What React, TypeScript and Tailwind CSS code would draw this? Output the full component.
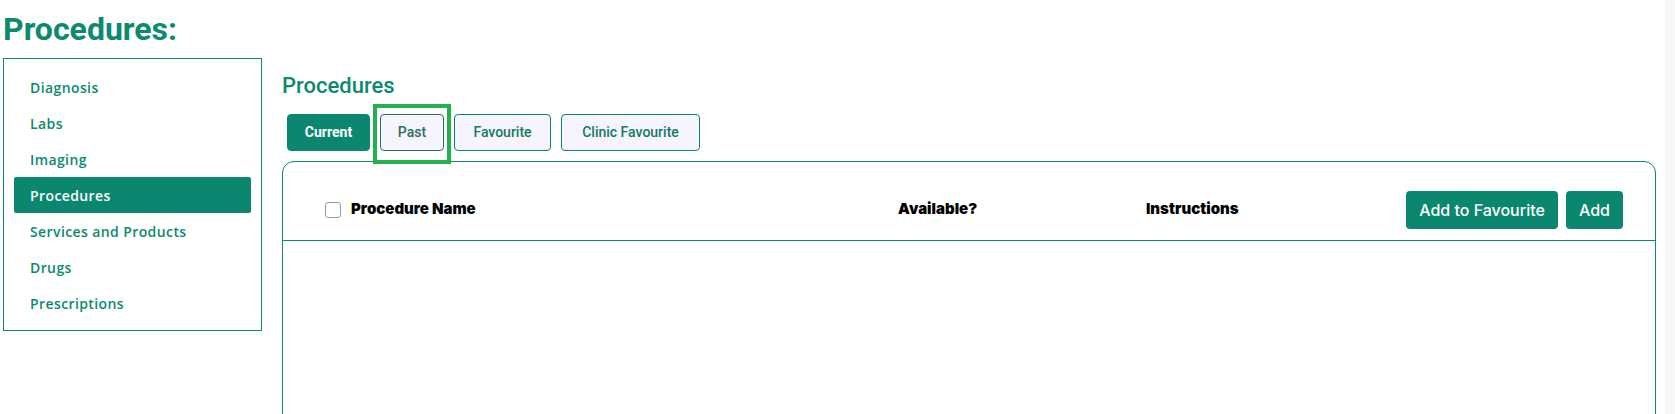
import React, { useState } from 'react';

const SECTIONS = [
  'Diagnosis',
  'Labs',
  'Imaging',
  'Procedures',
  'Services and Products',
  'Drugs',
  'Prescriptions',
];

const TABS = [
  { label: 'Current', width: 'w-[83px]' },
  { label: 'Past', width: 'w-[64px]' },
  { label: 'Favourite', width: 'w-[97px]' },
  { label: 'Clinic Favourite', width: 'w-[139px]' },
];

export default function App() {
  const [section, setSection] = useState('Procedures');
  const [tab, setTab] = useState('Current');
  const [allChecked, setAllChecked] = useState(false);

  return (
    <div className="flex h-[414px] w-full overflow-hidden bg-white font-['Roboto',sans-serif]">
      <div className="flex min-w-0 flex-1 flex-col">
        {/* page title */}
        <h1 className="ml-[3px] mt-[10px] text-[32px] font-bold leading-[38px] text-[#0b8a6e]">
          Procedures:
        </h1>

        <div className="mt-[10px] flex flex-1 items-start">
          {/* section menu */}
          <nav className="ml-[3px] w-[259px] shrink-0 border border-[#0b8a6e] px-[10px] pb-[9px] pt-[10px] font-['Open_Sans',sans-serif]">
            {SECTIONS.map((s) => (
              <button
                key={s}
                onClick={() => setSection(s)}
                className={`flex h-[36px] w-full items-center rounded-[2px] pl-[16px] text-left text-[14px] font-semibold tracking-[0.4px] ${
                  section === s ? 'bg-[#0b876f] text-white' : 'text-[#0b8a6e]'
                }`}
              >
                {s}
              </button>
            ))}
          </nav>

          {/* main column */}
          <main className="ml-[20px] mr-[9px] flex min-w-0 flex-1 flex-col pt-[14px]">
            <h2 className="text-[22px] font-medium leading-[28px] text-[#0b8a6e]">Procedures</h2>

            <div className="ml-[5px] mt-[14px] flex gap-[10px]">
              {TABS.map((t) => (
                <div key={t.label} className="relative">
                  <button
                    onClick={() => setTab(t.label)}
                    className={`h-[37px] ${t.width} rounded-[4px] border text-[14px] ${
                      tab === t.label
                        ? 'border-[#0b876f] bg-[#0b876f] font-bold text-white'
                        : t.label === 'Past'
                          ? 'border-[#2d6e64] bg-[#f6f4fd] font-medium text-[#2d6e64]'
                          : 'border-[#0b876f] bg-[#f6f4fd] font-medium text-[#137a66]'
                    }`}
                  >
                    {t.label}
                  </button>
                  {t.label === 'Past' && (
                    <div className="pointer-events-none absolute -left-[7px] -top-[10px] h-[60px] w-[78px] border-[4px] border-[#22b14c]" />
                  )}
                </div>
              ))}
            </div>

            {/* table card */}
            <section className="mt-[10px] h-[400px] rounded-t-[12px] border border-[#0b8a6e]">
              <div className="flex h-[79px] items-center border-b border-[#0b8a6e] pl-[42px] pr-[32px] pt-[17px] font-['Inter',sans-serif] text-[15px] font-black text-black">
                <div className="flex w-[573px] items-center gap-[10px]">
                  <button
                    onClick={() => setAllChecked((v) => !v)}
                    className={`h-[16px] w-[16px] rounded-[3px] border ${
                      allChecked ? 'border-[#0b876f] bg-[#0b876f]' : 'border-[#9a9a9a] bg-white'
                    }`}
                    aria-label="Select all"
                  />
                  <span>Procedure Name</span>
                </div>
                <div className="w-[248px]">Available?</div>
                <div className="flex-1">Instructions</div>
                <div className="flex gap-[8px] font-['Inter',sans-serif] text-[16px] font-medium text-white">
                  <button className="h-[38px] w-[152px] rounded-[4px] bg-[#0b876f]">Add to Favourite</button>
                  <button className="h-[38px] w-[57px] rounded-[4px] bg-[#0b876f]">Add</button>
                </div>
              </div>
            </section>
          </main>
        </div>
      </div>

      {/* scrollbar track */}
      <div className="w-[10px] shrink-0 bg-[#f8f8f8]" />
    </div>
  );
}
